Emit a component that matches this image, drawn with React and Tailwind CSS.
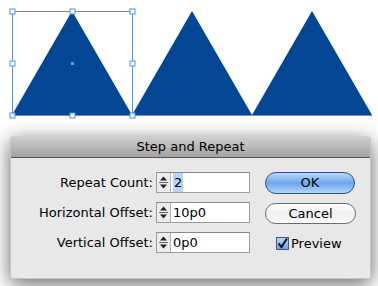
import React from "react";

const font = { fontFamily: '"DejaVu Sans", "Lucida Grande", sans-serif' };

const Handle = ({ x, y }) => (
  <rect x={x - 2.5} y={y - 2.5} width="5" height="5" fill="#fff" stroke="#4a90f5" strokeWidth="1" />
);

const Canvas = () => (
  <svg width="378" height="120" className="block">
    <polygon points="12,115 72,11 132,115" fill="#034694" />
    <polygon points="132,115 192,11 252,115" fill="#034694" />
    <polygon points="252,115 312,11 372,115" fill="#034694" />
    <line x1="132" y1="115.5" x2="372" y2="115.5" stroke="#6f8fc0" strokeWidth="1" />
    <rect x="12.5" y="11.5" width="120" height="104" fill="none" stroke="#4a90f5" strokeWidth="1" />
    <Handle x={12.5} y={11.5} />
    <Handle x={72.5} y={11.5} />
    <Handle x={132.5} y={11.5} />
    <Handle x={12.5} y={63.5} />
    <Handle x={132.5} y={63.5} />
    <Handle x={12.5} y={115.5} />
    <Handle x={72.5} y={115.5} />
    <Handle x={132.5} y={115.5} />
    <rect x="71" y="62" width="3" height="3" fill="#5b9cf8" />
  </svg>
);

const Spinner = () => (
  <div className="w-[14px] h-full flex flex-col items-center justify-center border-r border-[#b5b5b5] bg-[#ececec]">
    <svg width="9" height="15" viewBox="0 0 9 15">
      <polygon points="4.5,1.5 8,5.5 1,5.5" fill="#222" />
      <line x1="0" y1="7.5" x2="9" y2="7.5" stroke="#666" strokeWidth="1" />
      <polygon points="1,9.5 8,9.5 4.5,13.5" fill="#222" />
    </svg>
  </div>
);

const Row = ({ label, value, selected }) => (
  <div className="flex items-center h-[21px]">
    <div className="w-[145px] pr-[3px] text-right text-[13px] text-black whitespace-nowrap">{label}</div>
    <div className="flex h-[21px] w-[94px] border border-[#9c9c9c] border-t-[#8a8a8a] bg-white">
      <Spinner />
      <div className="flex items-center pl-[2px] text-[13px] text-black">
        <span className={selected ? "bg-[#b5d5ff] px-[1px]" : ""}>{value}</span>
      </div>
    </div>
  </div>
);

export default function App() {
  return (
    <div className="w-[378px] h-[286px] overflow-hidden bg-white" style={font}>
      <Canvas />
      <div className="ml-[10px] mt-[16px] w-[361px] h-[143px] rounded-t-[4px] bg-[#e8e8e8] border-x border-b border-[#c4c4c4] shadow-[0_5px_20px_rgba(0,0,0,0.6)] flex flex-col">
        <div className="h-[22px] rounded-t-[4px] bg-gradient-to-b from-[#d0d0d0] to-[#a3a3a3] border-b border-[#555] flex items-center justify-center text-[13px] text-black">
          Step and Repeat
        </div>
        <div className="flex pt-[14px]">
          <div className="flex flex-col gap-[9px]">
            <Row label="Repeat Count:" value="2" selected />
            <Row label="Horizontal Offset:" value="10p0" />
            <Row label="Vertical Offset:" value="0p0" />
          </div>
          <div className="ml-[15px] flex flex-col">
            <button className="w-[90px] h-[22px] rounded-full border border-[#2f4f86] bg-gradient-to-b from-[#bcd9fa] via-[#6ea6ec] to-[#b0d6fb] text-[13px] text-black">
              OK
            </button>
            <button className="mt-[9px] w-[91px] h-[21px] rounded-full border border-[#6b6b6b] bg-gradient-to-b from-white via-[#f0f0f0] to-[#fafafa] text-[13px] text-black">
              Cancel
            </button>
            <div className="mt-[9px] ml-[11px] flex items-center gap-[2px] h-[21px]">
              <div className="w-[13px] h-[13px] border border-[#3c5a8a] bg-gradient-to-b from-[#b9d6f7] to-[#6fa5e6] flex items-center justify-center">
                <svg width="11" height="11" viewBox="0 0 11 11">
                  <path d="M1.5 5.5 L4.5 9 L10 0.5" fill="none" stroke="#111" strokeWidth="2" />
                </svg>
              </div>
              <span className="text-[13px] text-black">Preview</span>
            </div>
          </div>
        </div>
      </div>
    </div>
  );
}
